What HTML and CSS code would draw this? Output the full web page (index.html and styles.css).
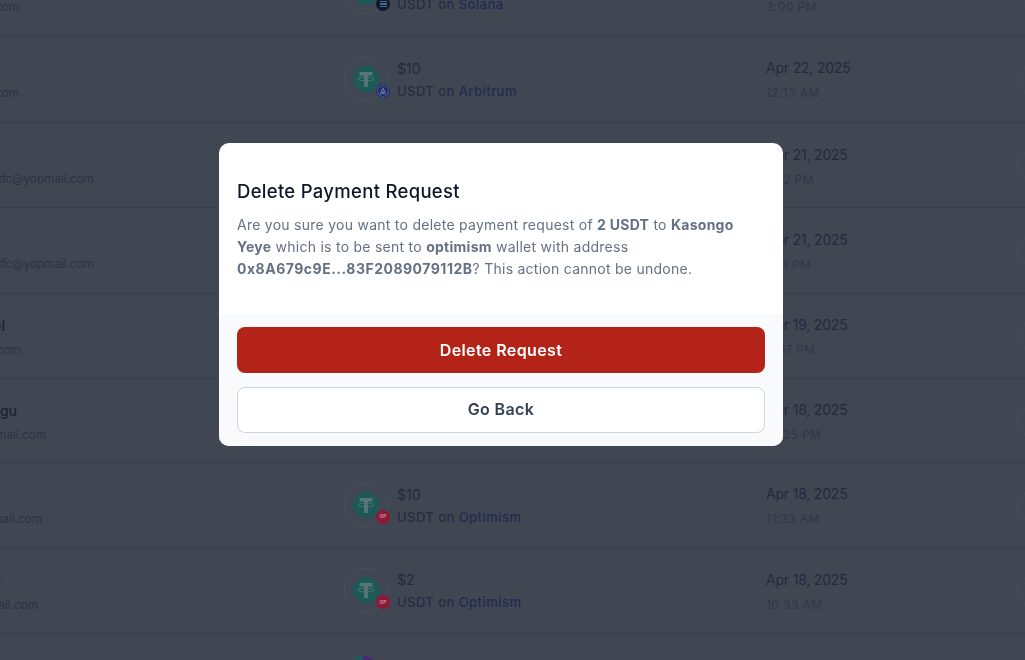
FILE: index.html
```html
<!DOCTYPE html>
<html lang="en">
<head>
<meta charset="utf-8">
<title>Payment Requests</title>
<link rel="stylesheet" href="styles.css">
</head>
<body>
<svg class="defs" width="0" height="0" aria-hidden="true">
  <symbol id="tether" viewBox="0 0 26 26">
    <circle cx="13" cy="13" r="13" fill="#1b5a56"/>
    <path d="M6.500 6h13v3.500h-4.600V21h-3.800V9.500H6.500z" fill="#5a7575"/>
    <ellipse cx="13" cy="13" rx="8" ry="1.900" fill="none" stroke="#5a7575" stroke-width=".8"/>
  </symbol>
</svg>
<main class="list">
  <div class="row r0">
    <div class="cust end19"><span class="name">&nbsp;</span><span class="mail">kasongo@yopmail.com</span></div>
    <div class="asset"><div class="ring"><svg class="coin"><use href="#tether"/></svg><span class="badge sol"><i></i><i></i><i></i></span></div><div class="stack"><span class="amt">$5</span><span class="net">USDT on <b>Solana</b></span></div></div>
    <div class="stack"><span class="date">Apr 22, 2025</span><span class="time">3:00 PM</span></div>
    <span class="act"></span>
  </div>
  <div class="row r1">
    <div class="cust end19"><span class="name">&nbsp;</span><span class="mail">kasongo@yopmail.com</span></div>
    <div class="asset"><div class="ring"><svg class="coin"><use href="#tether"/></svg><span class="badge arb"><svg viewBox="0 0 12 12"><path d="M6 .8l4.500 2.600v5.200L6 11.200 1.500 8.600V3.400z" fill="none" stroke="#3a55a8" stroke-width="1"/><path d="M3.500 8.800L6 3.600l2.500 5.200M5 8.800l1-2 1 2" fill="none" stroke="#6478b8" stroke-width=".9"/></svg></span></div><div class="stack"><span class="amt">$10</span><span class="net">USDT on <b>Arbitrum</b></span></div></div>
    <div class="stack"><span class="date">Apr 22, 2025</span><span class="time">12:13 AM</span></div>
    <span class="act"></span>
  </div>
  <div class="row r2">
    <div class="cust end94"><span class="name">&nbsp;</span><span class="mail">kasongotfc@yopmail.com</span></div>
    <div class="asset"></div>
    <div class="stack"><span class="date">Apr 21, 2025</span><span class="time">3:12 PM</span></div>
    <span class="act"></span>
  </div>
  <div class="row r3">
    <div class="cust end94"><span class="name">&nbsp;</span><span class="mail">kasongotfc@yopmail.com</span></div>
    <div class="asset"></div>
    <div class="stack"><span class="date">Apr 21, 2025</span><span class="time">3:11 PM</span></div>
    <span class="act"></span>
  </div>
  <div class="row r4">
    <div class="cust end21"><span class="name gap16">Michael</span><span class="mail">michael@mail.com</span></div>
    <div class="asset"></div>
    <div class="stack"><span class="date">Apr 19, 2025</span><span class="time">5:07 PM</span></div>
    <span class="act"></span>
  </div>
  <div class="row r5">
    <div class="cust end46"><span class="name gap29">Mulongu</span><span class="mail">mulongu@yopmail.com</span></div>
    <div class="asset"></div>
    <div class="stack"><span class="date">Apr 18, 2025</span><span class="time">12:25 PM</span></div>
    <span class="act red"></span>
  </div>
  <div class="row r6">
    <div class="cust end42"><span class="name">&nbsp;</span><span class="mail">kasongo@yopmail.com</span></div>
    <div class="asset"><div class="ring"><svg class="coin"><use href="#tether"/></svg><span class="badge op">OP</span></div><div class="stack"><span class="amt">$10</span><span class="net">USDT on <b>Optimism</b></span></div></div>
    <div class="stack"><span class="date">Apr 18, 2025</span><span class="time">11:33 AM</span></div>
    <span class="act red"></span>
  </div>
  <div class="row r7">
    <div class="cust end38"><span class="name gap37">Kasongo Yeye</span><span class="mail">kasongo@gmail.com</span></div>
    <div class="asset"><div class="ring"><svg class="coin"><use href="#tether"/></svg><span class="badge op">OP</span></div><div class="stack"><span class="amt">$2</span><span class="net">USDT on <b>Optimism</b></span></div></div>
    <div class="stack"><span class="date">Apr 18, 2025</span><span class="time">10:33 AM</span></div>
    <span class="act red"></span>
  </div>
  <div class="row r8">
    <div class="cust"></div>
    <div class="asset"><span class="pie"></span></div>
  </div>
</main>
<div class="overlay">
  <section class="modal" role="dialog">
    <div class="body">
      <h2 class="title">Delete Payment Request</h2>
      <p class="text">Are you sure you want to delete payment request of <strong>2 USDT</strong> to <strong>Kasongo Yeye</strong> which is to be sent to <strong>optimism</strong> wallet with address <strong class="addr">0x8A679c9E...83F2089079112B</strong>? This action cannot be undone.</p>
    </div>
    <div class="foot">
      <button class="btn danger">Delete Request</button>
      <button class="btn plain">Go Back</button>
    </div>
  </section>
</div>
</body>
</html>
```
FILE: styles.css
```css
* { box-sizing: border-box; }
html, body { margin: 0; height: 100%; overflow: hidden; }
body { background: #414653; font-family: Inter, "Liberation Sans", sans-serif; color: #1b2238; }
.defs { display: block; height: 0; }

.list { margin-top: -50px; }
.row { display: grid; grid-template-columns: 344px 422px 251px 30px; align-items: center; border-bottom: 1px solid #393e4c; }
.r0 { height: 87px; }
.r1 { height: 86px; }
.r2 { height: 85px; }
.r3 { height: 86px; }
.r4 { height: 85px; }
.r5 { height: 84px; padding-top: 2px; }
.r6 { height: 86px; }
.r7 { height: 85px; }
.r8 { height: 85px; align-items: start; padding-top: 22px; }
.r2 .stack, .r3 .stack { padding-top: 2px; }

.cust { display: flex; flex-direction: column; align-items: flex-end; gap: 4px; padding-top: 1px; white-space: nowrap; }
.end19 { padding-right: 325px; }
.end21 { padding-right: 323px; }
.end38 { padding-right: 306px; }
.end42 { padding-right: 302px; }
.end46 { padding-right: 298px; }
.end94 { padding-right: 250px; }
.gap16 { margin-right: 16px; }
.gap29 { margin-right: 29px; }
.gap37 { margin-right: 37px; }
.name { font-size: 14px; line-height: 22px; font-weight: 500; color: #1b2238; }
.mail { font-size: 12px; line-height: 18px; letter-spacing: -.15px; color: #2d3343; }

.asset { display: flex; align-items: center; gap: 9px; }
.ring { position: relative; width: 44px; height: 44px; margin-bottom: 2px; border: 1px solid #4a4e5c; border-radius: 50%; display: flex; align-items: center; justify-content: center; flex: none; }
.coin { width: 26px; height: 26px; }
.badge { position: absolute; left: 31px; top: 26px; width: 14px; height: 14px; border-radius: 50%; display: flex; align-items: center; justify-content: center; flex-direction: column; gap: 1px; }
.badge svg { width: 14px; height: 14px; }
.sol { background: #12162e; }
.sol i { display: block; width: 7px; height: 1.500px; background: #3f6f8a; }
.arb { background: #232d52; }
.op { background: #8e1838; color: #c08a98; font-size: 5px; font-weight: 700; line-height: 1; }
.pie { width: 32px; height: 32px; margin: 0 0 0 3px; border-radius: 50%; background: linear-gradient(90deg, #1f5a5a 50%, #4a2a78 50%); }

.stack { display: flex; flex-direction: column; gap: 4px; white-space: nowrap; }
.amt, .date { font-size: 14px; line-height: 18px; color: #232a40; }
.date { margin-top: 2px; letter-spacing: -.2px; }
.net { font-size: 13px; line-height: 18px; font-weight: 500; letter-spacing: .45px; color: #262d45; }
.net b { font-weight: 500; color: #222c4e; }
.time { font-size: 12px; line-height: 18px; margin-top: 3px; letter-spacing: .4px; color: #31374a; }
.act { width: 30px; height: 30px; border: 1px solid #4a4e5c; border-radius: 50%; }
.act.red { border-color: #544a58; }

.overlay { position: fixed; inset: 0; display: flex; justify-content: center; align-items: flex-start; padding: 143px 23px 0 0; }
.modal { width: 564px; height: 303px; background: #fff; border-radius: 10px; overflow: hidden; display: flex; flex-direction: column; }
.body { height: 171px; padding: 35px 18px 0; }
.title { margin: 0 0 10px; font-size: 18.500px; line-height: 26px; font-weight: 500; letter-spacing: .3px; color: #101828; }
.text { margin: 0; font-size: 14px; line-height: 22px; letter-spacing: .26px; color: #667085; }
.text strong { font-weight: 700; }
.text .addr { letter-spacing: .5px; }
.foot { flex: 1; background: #f9fafb; padding: 13px 18px; display: flex; flex-direction: column; gap: 14px; }
.btn { height: 46px; border-radius: 8px; font-family: inherit; font-size: 16px; font-weight: 600; letter-spacing: .4px; }
.danger { background: #b42318; border: 0; color: #fff; }
.plain { background: #fff; border: 1px solid #d0d5dd; color: #344054; padding-bottom: 4px; }
```
